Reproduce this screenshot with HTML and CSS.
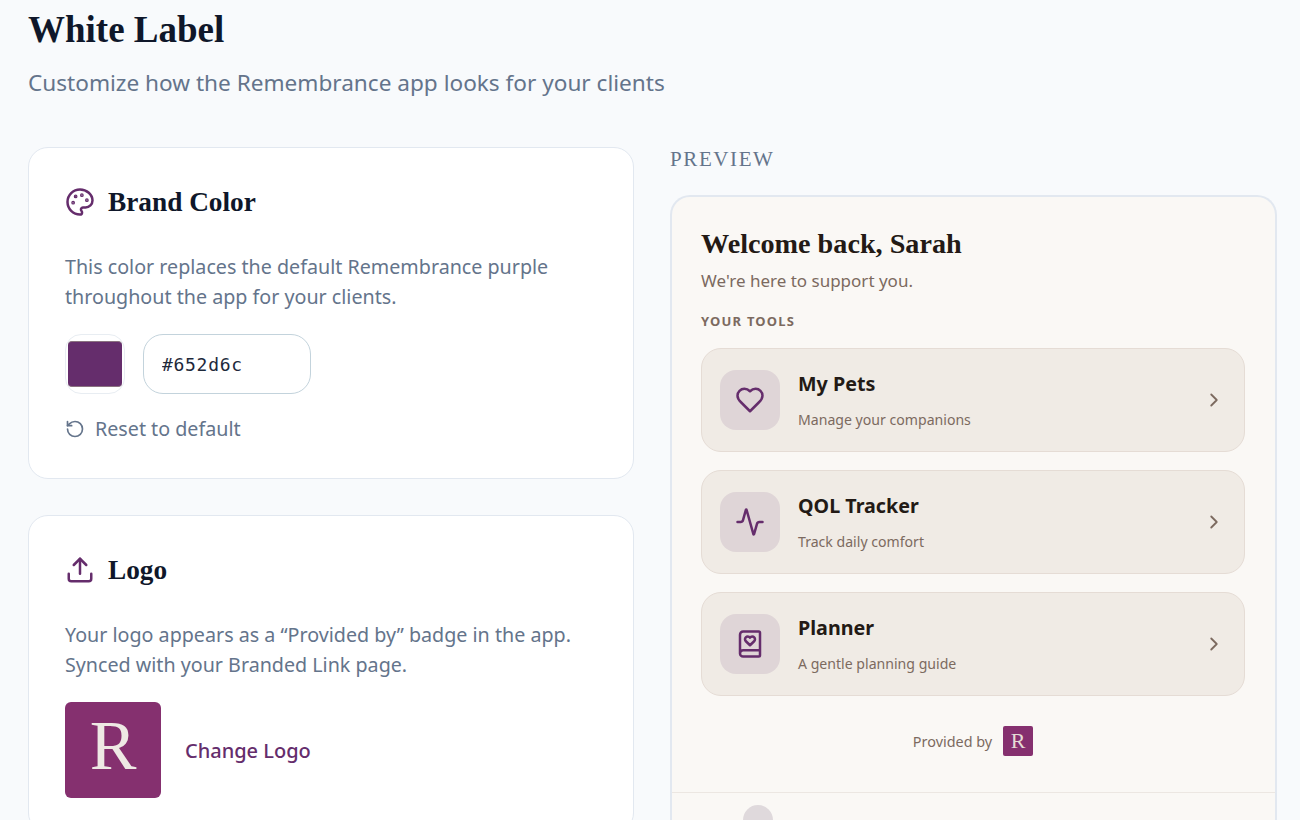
FILE: index.html
```html
<!DOCTYPE html>
<html lang="en">
<head>
    <meta charset="UTF-8">
    <title>White Label</title>
    <link rel="stylesheet" href="styles.css">
</head>
<body>
    <h1>White Label</h1>
    <p class="subtitle">Customize how the Remembrance app looks for your clients</p>

    <div class="columns">
        <div class="settings">
            <section class="card">
                <h2 class="card-title">
                    <svg class="card-icon" viewBox="0 0 24 24"><circle class="dot" cx="13.5" cy="6.5" r=".5"/><circle class="dot" cx="17.5" cy="10.5" r=".5"/><circle class="dot" cx="8.5" cy="7.5" r=".5"/><circle class="dot" cx="6.5" cy="12.5" r=".5"/><path d="M12 2C6.5 2 2 6.5 2 12s4.500 10 10 10c.926 0 1.648-.746 1.648-1.688 0-.437-.18-.835-.437-1.125-.29-.289-.438-.652-.438-1.125a1.640 1.640 0 0 1 1.668-1.668h1.996c3.051 0 5.555-2.503 5.555-5.554C21.965 6.012 17.461 2 12 2z"/></svg>
                    Brand Color
                </h2>
                <p class="card-text">This color replaces the default Remembrance purple throughout the app for your clients.</p>
                <div class="color-row">
                    <input class="swatch" type="color" value="#652d6c">
                    <input class="hex-input" type="text" value="#652d6c">
                </div>
                <div class="reset">
                    <svg viewBox="0 0 24 24"><path d="M3 12a9 9 0 1 0 9-9 9.750 9.750 0 0 0-6.740 2.740L3 8"/><path d="M3 3v5h5"/></svg>
                    Reset to default
                </div>
            </section>

            <section class="card">
                <h2 class="card-title">
                    <svg class="card-icon" viewBox="0 0 24 24"><path d="M21 15v4a2 2 0 0 1-2 2H5a2 2 0 0 1-2-2v-4"/><path d="M17 8l-5-5-5 5"/><path d="M12 3v12"/></svg>
                    Logo
                </h2>
                <p class="card-text">Your logo appears as a “Provided by” badge in the app. Synced with your Branded Link page.</p>
                <div class="logo-row">
                    <div class="logo">R</div>
                    <span class="change-logo">Change Logo</span>
                </div>
            </section>
        </div>

        <div class="preview-col">
            <div class="preview-label">PREVIEW</div>
            <div class="phone">
                <div class="phone-body">
                    <h3 class="welcome">Welcome back, Sarah</h3>
                    <p class="support">We're here to support you.</p>
                    <div class="tools-label">YOUR TOOLS</div>

                    <div class="tool">
                        <div class="tool-icon">
                            <svg viewBox="0 0 24 24"><path d="M19 14c1.490-1.460 3-3.210 3-5.500A5.500 5.500 0 0 0 16.500 3c-1.760 0-3 .5-4.500 2-1.500-1.500-2.740-2-4.500-2A5.500 5.500 0 0 0 2 8.500c0 2.300 1.500 4.050 3 5.500l7 7Z"/></svg>
                        </div>
                        <div class="tool-text">
                            <div class="tool-name">My Pets</div>
                            <div class="tool-desc">Manage your companions</div>
                        </div>
                        <svg class="chevron" viewBox="0 0 24 24"><path d="M9 18l6-6-6-6"/></svg>
                    </div>

                    <div class="tool">
                        <div class="tool-icon">
                            <svg viewBox="0 0 24 24"><path d="M22 12h-2.480a2 2 0 0 0-1.930 1.460l-2.350 8.360a.25.25 0 0 1-.48 0L9.240 2.180a.25.25 0 0 0-.48 0l-2.350 8.360A2 2 0 0 1 4.490 12H2"/></svg>
                        </div>
                        <div class="tool-text">
                            <div class="tool-name">QOL Tracker</div>
                            <div class="tool-desc">Track daily comfort</div>
                        </div>
                        <svg class="chevron" viewBox="0 0 24 24"><path d="M9 18l6-6-6-6"/></svg>
                    </div>

                    <div class="tool">
                        <div class="tool-icon">
                            <svg viewBox="0 0 24 24"><path d="M4 19.500v-15A2.500 2.500 0 0 1 6.500 2H19a1 1 0 0 1 1 1v18a1 1 0 0 1-1 1H6.500a1 1 0 0 1 0-5H20"/><path d="M16 8.200C16 7 15 6 13.800 6c-.8 0-1.400.3-1.800.9-.4-.6-1-.9-1.800-.9C9 6 8 7 8 8.200c0 .6.300 1.200.7 1.600L12 13l3.300-3.200c.4-.4.7-1 .7-1.600"/></svg>
                        </div>
                        <div class="tool-text">
                            <div class="tool-name">Planner</div>
                            <div class="tool-desc">A gentle planning guide</div>
                        </div>
                        <svg class="chevron" viewBox="0 0 24 24"><path d="M9 18l6-6-6-6"/></svg>
                    </div>

                    <div class="provided">
                        Provided by
                        <div class="provided-logo">R</div>
                    </div>
                </div>
                <div class="phone-nav">
                    <div class="nav-dot"></div>
                </div>
            </div>
        </div>
    </div>
</body>
</html>
```

FILE: styles.css
```css
html, body {
    height: 820px;
    overflow: hidden;
}
body {
    margin: 0;
    padding: 0 23px 0 28px;
    background: #f8fafc;
    font-family: "Noto Sans", "Open Sans", sans-serif;
    color: #0f172a;
}
h1 {
    margin: 0;
    padding-top: 9px;
    font-family: "Liberation Serif", serif;
    font-size: 37px;
    line-height: 42px;
    font-weight: bold;
}
.subtitle {
    margin: 17px 0 0;
    font-size: 22.6px;
    line-height: 30px;
    color: #64748b;
}
.columns {
    display: flex;
    gap: 36px;
    margin-top: 49px;
}
.settings {
    width: 606px;
    flex-shrink: 0;
}
.card {
    background: white;
    border: 1px solid #e2e8f0;
    border-radius: 20px;
    padding: 36px 36px 34px;
    margin-bottom: 36px;
}
.card-title {
    display: flex;
    align-items: center;
    gap: 13px;
    margin: 0;
    font-family: "Liberation Serif", serif;
    font-size: 27.3px;
    line-height: 36px;
}
.card-icon {
    width: 30px;
    height: 30px;
    fill: none;
    stroke: #652d6c;
    stroke-width: 2;
    stroke-linecap: round;
    stroke-linejoin: round;
}
.dot {
    fill: #652d6c;
}
.card-text {
    margin: 32px 0 0;
    font-size: 19.7px;
    line-height: 30px;
    color: #64748b;
}
.color-row {
    display: flex;
    gap: 18px;
    margin-top: 22px;
}
.swatch {
    width: 60px;
    height: 60px;
    box-sizing: border-box;
    margin: 0;
    padding: 0;
    background: white;
    border: 1px solid #e8edf2;
    border-radius: 16px;
}
.swatch::-webkit-color-swatch-wrapper {
    padding: 6px 2px;
}
.swatch::-webkit-color-swatch {
    border: none;
    border-top: 1px solid #8a7280;
    border-bottom: 1px solid #8a7280;
    border-radius: 4px;
}
.hex-input {
    width: 168px;
    height: 60px;
    box-sizing: border-box;
    margin: 0;
    border: 1px solid #c3d3dc;
    border-radius: 20px;
    padding: 0 18px;
    background: white;
    font-family: "DejaVu Sans Mono", monospace;
    font-size: 18px;
    letter-spacing: 0.7px;
    color: #1e293b;
}
.reset {
    display: flex;
    align-items: center;
    gap: 10px;
    margin-top: 20px;
    font-size: 19.7px;
    line-height: 30px;
    color: #64748b;
}
.reset svg {
    width: 20px;
    height: 20px;
    fill: none;
    stroke: #64748b;
    stroke-width: 2;
    stroke-linecap: round;
    stroke-linejoin: round;
}
.logo-row {
    display: flex;
    align-items: center;
    gap: 24px;
    margin-top: 22px;
}
.logo {
    width: 96px;
    height: 96px;
    border-radius: 6px;
    background: #85306f;
    color: #eee9e4;
    font-family: "Liberation Serif", serif;
    font-size: 70px;
    line-height: 88px;
    padding-bottom: 8px;
    box-sizing: border-box;
    text-align: center;
}
.change-logo {
    font-size: 20px;
    font-weight: 500;
    color: #652d6c;
}
.preview-col {
    flex: 1;
}
.preview-label {
    font-family: "Liberation Serif", serif;
    font-size: 21px;
    line-height: 24px;
    letter-spacing: 1.6px;
    color: #64748b;
}
.phone {
    margin-top: 24px;
    background: #faf8f5;
    border: 2px solid #e2e8f0;
    border-bottom: none;
    border-radius: 20px 20px 0 0;
    height: 640px;
}
.phone-body {
    padding: 29px 30px 0 29px;
}
.welcome {
    margin: 0;
    font-family: "Liberation Serif", serif;
    font-size: 28.2px;
    line-height: 36px;
    color: #231a15;
}
.support {
    margin: 6px 0 0;
    font-size: 17px;
    line-height: 26px;
    color: #7c6a5f;
}
.tools-label {
    margin-top: 18px;
    font-size: 13px;
    line-height: 18px;
    font-weight: bold;
    letter-spacing: 1.2px;
    color: #7c6a5f;
}
.tool {
    display: flex;
    align-items: center;
    height: 104px;
    box-sizing: border-box;
    margin-top: 18px;
    padding: 0 18px;
    background: #f0ebe5;
    border: 1px solid #e5dcd5;
    border-radius: 20px;
}
.tool-icon {
    width: 60px;
    height: 60px;
    border-radius: 16px;
    background: #dfd5d7;
    display: flex;
    align-items: center;
    justify-content: center;
    margin-right: 18px;
}
.tool-icon svg {
    width: 30px;
    height: 30px;
    fill: none;
    stroke: #652d6c;
    stroke-width: 2;
    stroke-linecap: round;
    stroke-linejoin: round;
}
.tool-text {
    flex: 1;
}
.tool-name {
    font-size: 19.7px;
    line-height: 28px;
    font-weight: bold;
    color: #231a15;
}
.tool-desc {
    margin-top: 12px;
    font-size: 14.1px;
    line-height: 20px;
    color: #7c6a5f;
}
.chevron {
    width: 22px;
    height: 22px;
    margin-right: 1px;
    fill: none;
    stroke: #7c6a5f;
    stroke-width: 2;
    stroke-linecap: round;
    stroke-linejoin: round;
}
.provided {
    display: flex;
    align-items: center;
    justify-content: center;
    gap: 11px;
    margin-top: 30px;
    font-size: 14.4px;
    color: #7c6a5f;
}
.provided-logo {
    width: 30px;
    height: 30px;
    border-radius: 2px;
    background: #85306f;
    color: #e5dcd5;
    font-family: "Liberation Serif", serif;
    font-size: 22px;
    display: flex;
    align-items: center;
    justify-content: center;
}
.phone-nav {
    margin-top: 36px;
    border-top: 1px solid #ece7e2;
    padding: 12px 0 0 71px;
}
.nav-dot {
    width: 30px;
    height: 30px;
    border-radius: 50%;
    background: #dfd9dc;
}
```
